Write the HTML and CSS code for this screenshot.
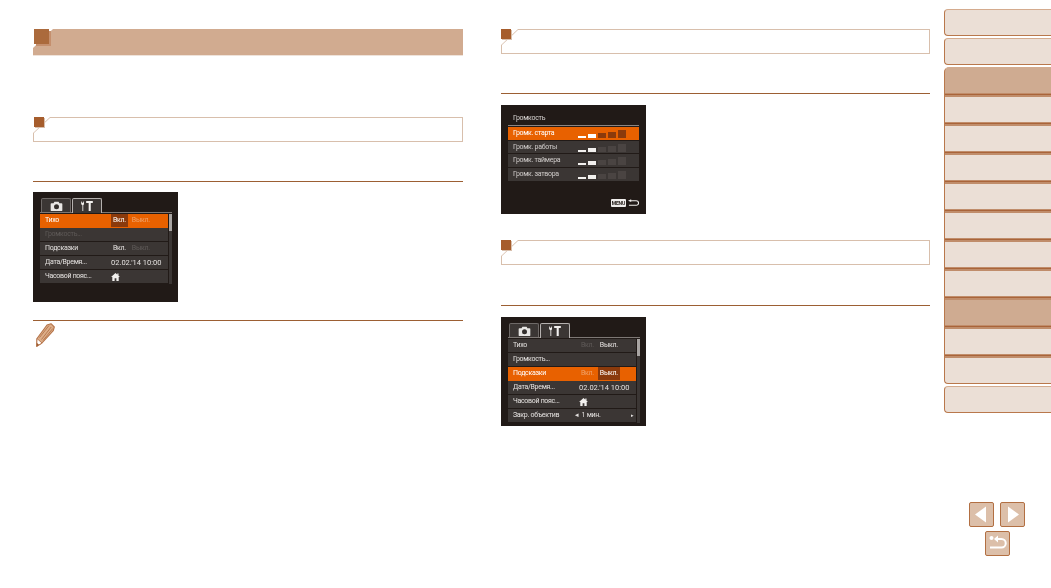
FILE: index.html
```html
<!DOCTYPE html>
<html lang="ru">
<head>
<meta charset="utf-8">
<title>Руководство</title>
<link rel="stylesheet" href="styles.css">
</head>
<body>
<svg class="defs" width="0" height="0" aria-hidden="true">
  <symbol id="cam" viewBox="0 0 14 12"><path fill="#e8e6e4" d="M4.500 1h5l1 1.600H13a1 1 0 0 1 1 1V11a1 1 0 0 1-1 1H1a1 1 0 0 1-1-1V3.600a1 1 0 0 1 1-1h2.500z"/><circle cx="7" cy="7" r="3" fill="#332e2c"/></symbol>
  <symbol id="tools" viewBox="0 0 14 12"><path fill="#f2f0ee" d="M0 1.500 1 0v2h1.400V0l1 1.500V4L2.500 5v7h-1V5L0 4zM6 0h8v2.500h-2.500V12H9V2.500H6z"/></symbol>
  <symbol id="home" viewBox="0 0 10 9"><path fill="#f2f0ee" d="M5 0l5 4.500H8.600V9H6V6H4v3H1.400V4.500H0zM7 .6h1.400V3L7 1.800z"/></symbol>
</svg>
<div class="page">
  <main class="col col-left">
    <div class="h1"><div class="h1-shape"></div><span class="mark-lg"></span></div>
    <div class="h2 h2-first"><div class="h2-frame"></div><span class="mark"></span></div>
    <hr class="rule rule-a">
    <section class="screen screen-a">
      <div class="tabs">
        <span class="tab"><svg class="ico-cam"><use href="#cam"/></svg></span>
        <span class="tab on"><svg class="ico-tool"><use href="#tools"/></svg></span>
      </div>
      <div class="menu">
        <div class="rows">
          <div class="row sel"><span class="lbl">Тихо</span><span class="opt box">Вкл.</span><span class="opt dimo">Выкл.</span></div>
          <div class="row"><span class="lbl off">Громкость...</span></div>
          <div class="row"><span class="lbl">Подсказки</span><span class="opt">Вкл.</span><span class="opt off">Выкл.</span></div>
          <div class="row"><span class="lbl">Дата/Время...</span><span class="val">02.02.'14 10:00</span></div>
          <div class="row"><span class="lbl">Часовой пояс...</span><svg class="ico-home"><use href="#home"/></svg></div>
        </div>
        <div class="scroll"><i class="thumb"></i></div>
      </div>
    </section>
    <hr class="rule rule-b">
    <svg class="pencil" viewBox="0 0 19 24" aria-hidden="true">
      <path d="M11 2 15 .7l3.300 3.300-1 3.700L6 20 .7 23.300 1 15.500z" fill="#dcae8a" stroke="#b5744a" stroke-width="1.100" stroke-linejoin="round"/>
      <path d="M13 2.500 3.500 14.500M15.200 4 5.500 16.500M16.800 5.500 7 17.500" fill="none" stroke="#b5744a" stroke-width=".9"/>
      <path d="M1 15.500 6 20 .7 23.300z" fill="#fff" stroke="#b5744a" stroke-width=".9" stroke-linejoin="round"/>
      <path d="M.7 19.800 3 21.800.7 23.500z" fill="#9c5c30"/>
    </svg>
  </main>

  <main class="col col-right">
    <div class="h2"><div class="h2-frame"></div><span class="mark"></span></div>
    <hr class="rule rule-a">
    <section class="screen screen-b">
      <div class="vol-title">Громкость</div>
      <div class="vol-rows">
        <div class="vrow sel"><span class="vlbl">Громк. старта</span><span class="bars lit"><i></i><i></i><i></i><i></i><i></i></span></div>
        <div class="vrow"><span class="vlbl">Громк. работы</span><span class="bars"><i></i><i></i><i></i><i></i><i></i></span></div>
        <div class="vrow"><span class="vlbl">Громк. таймера</span><span class="bars"><i></i><i></i><i></i><i></i><i></i></span></div>
        <div class="vrow"><span class="vlbl">Громк. затвора</span><span class="bars"><i></i><i></i><i></i><i></i><i></i></span></div>
      </div>
      <div class="vol-foot"><span class="menu-key">MENU</span>
        <svg class="back-mini" viewBox="0 0 12 8"><path d="M3 1.500h6a2.500 2.500 0 0 1 0 5H1" fill="none" stroke="#f0eeec" stroke-width="1.200"/><path d="M0 1.500 3.500 0v3z" fill="#f0eeec"/></svg>
      </div>
    </section>
    <div class="h2 h2-second"><div class="h2-frame"></div><span class="mark"></span></div>
    <hr class="rule rule-c">
    <section class="screen screen-c">
      <div class="tabs">
        <span class="tab"><svg class="ico-cam"><use href="#cam"/></svg></span>
        <span class="tab on"><svg class="ico-tool"><use href="#tools"/></svg></span>
      </div>
      <div class="menu">
        <div class="rows">
          <div class="row"><span class="lbl">Тихо</span><span class="opt off">Вкл.</span><span class="opt">Выкл.</span></div>
          <div class="row"><span class="lbl">Громкость...</span></div>
          <div class="row sel"><span class="lbl">Подсказки</span><span class="opt dimo">Вкл.</span><span class="opt box">Выкл.</span></div>
          <div class="row"><span class="lbl">Дата/Время...</span><span class="val">02.02.'14 10:00</span></div>
          <div class="row"><span class="lbl">Часовой пояс...</span><svg class="ico-home"><use href="#home"/></svg></div>
          <div class="row"><span class="lbl">Закр. объектив</span><span class="pick">◂&nbsp;&nbsp;1 мин.</span><span class="pick-r">▸</span></div>
        </div>
        <div class="scroll"><i class="thumb"></i></div>
      </div>
    </section>
  </main>

  <nav class="side">
    <div class="tab-solo"></div>
    <div class="tab-solo"></div>
    <div class="tab-group">
      <div class="st st-first cur"></div>
      <div class="st"></div>
      <div class="st"></div>
      <div class="st"></div>
      <div class="st"></div>
      <div class="st"></div>
      <div class="st"></div>
      <div class="st"></div>
      <div class="st cur"></div>
      <div class="st"></div>
      <div class="st st-last"></div>
    </div>
    <div class="tab-solo"></div>
    <div class="pager">
      <div class="pager-row">
        <span class="pbtn"><svg viewBox="0 0 23 23"><path d="M16 3.500v16L5 11.500z" fill="#fff"/></svg></span>
        <span class="pbtn"><svg viewBox="0 0 23 23"><path d="M7 3.500v16l11-8z" fill="#fff"/></svg></span>
      </div>
      <span class="pbtn"><svg viewBox="0 0 23 23"><circle cx="5.500" cy="6" r="2" fill="#fff"/><path d="M11 7h4.500a4 4 0 0 1 0 8.500H4" fill="none" stroke="#fff" stroke-width="2"/><path d="M8 7l4-3.500v7z" fill="#fff"/></svg></span>
    </div>
  </nav>
</div>
</body>
</html>
```

FILE: styles.css
```css
* { box-sizing: border-box; }
html, body { margin: 0; padding: 0; background: #fff; }
body { font-family: "Liberation Sans", Arial, sans-serif; overflow: hidden; }
.defs { position: absolute; }

.page { display: flex; width: 1051px; height: 588px; }
.col { display: flex; flex-direction: column; padding-top: 29px; flex: none; }
.col-left { width: 430px; margin-left: 33px; }
.col-right { width: 429px; margin-left: 38px; }

/* section headings */
.h1 { position: relative; height: 27px; flex: none; margin-bottom: 61px; }
.h1-shape { position: absolute; inset: 0; background: #d1ab90; border-bottom: 1px solid #efe3da; clip-path: polygon(20px 0, 100% 0, 100% 100%, 0 100%, 0 19px); }
.mark-lg { position: absolute; left: 1px; top: 0; width: 15px; height: 15px; background: #ab6a3c; box-shadow: 2px 2px 0 #c58f6d; }

.h2 { position: relative; height: 25px; flex: none; }
.h2-second { margin-top: 26px; }
.h2-frame { position: absolute; inset: 0; background: #d8bfac; clip-path: polygon(17px 0, 100% 0, 100% 100%, 0 100%, 0 16px); }
.h2-frame::before { content: ""; position: absolute; inset: 1px; background: #fff; clip-path: polygon(16px 0, 100% 0, 100% 100%, 0 100%, 0 15px); }
.mark { position: absolute; left: 1px; top: 0; width: 10px; height: 10px; background: #a65d2c; box-shadow: 1px 1px 0 #d8bfac; }
.col-right .mark { left: 0; }

.rule { border: 0; height: 1px; margin: 0; background: #9c5f33; flex: none; }
.rule-a { margin-top: 39px; }
.rule-b { margin-top: 18px; }
.rule-c { margin-top: 40px; }

/* camera screens */
.screen { background: #211a17; color: #ece9e7; width: 145px; flex: none; font-family: Roboto, "Liberation Sans", sans-serif; font-size: 7px; letter-spacing: -0.3px; line-height: 1; }
.screen-a { height: 110px; margin-top: 10px; padding: 6px 6px 0 7px; }
.screen-b { height: 109px; margin-top: 11px; display: flex; flex-direction: column; padding: 0 7px; }
.screen-c { height: 109px; margin-top: 11px; padding: 6px 6px 0 7px; }
.screen > * { filter: blur(.3px); }

.tabs { display: flex; gap: 1px; height: 15px; padding-left: 1px; border-bottom: 1px solid #7d7774; }
.tab { width: 30px; height: 14px; display: flex; align-items: center; justify-content: center; background: #3b3634; border: 1px solid #6e6967; border-bottom: 0; border-radius: 2px 2px 0 0; }
.tab.on { height: 15px; background: #3b3634; border-color: #b5b1af; }
.ico-cam { width: 13px; height: 10px; }
.ico-tool { width: 12px; height: 10px; }
.ico-home { width: 9px; height: 8px; }

.menu { display: flex; gap: 1px; margin-top: 1px; }
.rows { flex: 1; display: flex; flex-direction: column; }
.row { height: 14px; display: flex; align-items: center; background: #3b3634; border-bottom: 1px solid #211a17; padding-left: 5px; color: #e4e1df; }
.row.sel { background: #e86100; color: #fff; border-bottom-color: #e86100; }
.lbl { width: 66px; flex: none; white-space: nowrap; }
.opt { height: 13px; display: flex; align-items: center; padding: 0 2px; margin-right: 2px; white-space: nowrap; }
.opt.box { background: #8a3a0c; color: #fff; }
.off { color: #5f5a58; }
.dimo { color: #f0a36a; }
.val { font-size: 7.500px; letter-spacing: 0; white-space: nowrap; }
.pick { white-space: nowrap; margin-left: -4px; }
.pick-r { margin-left: auto; padding-right: 2px; font-size: 5px; }
.scroll { width: 3px; flex: none; background: #3b3634; }
.thumb { display: block; height: 17px; background: #a8a4a2; }

/* volume screen */
.vol-title { flex: none; height: 13px; margin-top: 8px; padding: 2px 0 0 5px; border-bottom: 1px solid #8a8583; color: #d9d6d4; }
.vol-rows { display: flex; flex-direction: column; margin-top: 1px; }
.vrow { height: 13.700px; display: flex; align-items: center; background: #3b3634; border-bottom: 1px solid #211a17; padding-left: 5px; color: #cfcbc9; }
.vrow.sel { background: #e86100; color: #fff; border-bottom-color: #211a17; }
.vlbl { width: 65px; flex: none; white-space: nowrap; }
.bars { display: flex; align-items: flex-end; gap: 2px; height: 9px; }
.bars i { display: block; background: #4a4442; width: 8px; }
.bars i:nth-child(1) { height: 2px; background: #f2f0ee; }
.bars i:nth-child(2) { height: 4px; background: #f2f0ee; }
.bars i:nth-child(3) { height: 5px; }
.bars i:nth-child(4) { height: 6px; }
.bars i:nth-child(5) { height: 8px; }
.bars.lit i { background: #8a3a0c; }
.bars.lit i:nth-child(1), .bars.lit i:nth-child(2) { background: #fff; }
.vol-foot { margin-top: auto; padding-bottom: 7px; display: flex; justify-content: flex-end; align-items: center; gap: 2px; }
.menu-key { background: #f0eeec; color: #211a17; font-size: 5px; font-weight: 700; padding: 1.500px 1px; border-radius: 1px; letter-spacing: -0.2px; }
.back-mini { width: 11px; height: 8px; }

.pencil { width: 19px; height: 24px; margin: 2px 0 0 3px; flex: none; }

/* side index */
.side { width: 107px; margin-left: 14px; padding-top: 9px; display: flex; flex-direction: column; flex: none; }
.tab-solo { height: 27px; margin-bottom: 2px; flex: none; background: #ebdfd6; border: 1px solid #b9784c; border-top-color: #d4ab8e; border-right: 0; border-radius: 4px 0 0 4px; }
.tab-group { display: flex; flex-direction: column; flex: none; margin-bottom: 2px; }
.st { height: 29px; flex: none; padding-top: 4px; background: linear-gradient(#c08d6b 0 1px, #a9643a 1px 2px, #c08d6b 2px 4px, transparent 4px), #ebdfd6; border-left: 1px solid #b9784c; }
.st-first { height: 26px; padding-top: 0; background: #cfab91; border-top: 1px solid #d4ab8e; border-radius: 5px 0 0 0; }
.st-last { height: 30px; border-bottom: 1px solid #b9784c; border-radius: 0 0 0 4px; }
.st.cur { background: linear-gradient(#c08d6b 0 1px, #a9643a 1px 2px, #c08d6b 2px 4px, transparent 4px), #cfab91; }
.st-first.cur { background: #cfab91; }
.pager { margin-top: 87px; padding-left: 25px; width: 81px; display: flex; flex-direction: column; align-items: center; gap: 4px; }
.pager-row { display: flex; gap: 6px; }
.pbtn { width: 25px; height: 25px; display: block; background: #dcbfa9; border: 1px solid #b26f42; border-radius: 2px; }
.pbtn svg { display: block; width: 23px; height: 23px; }
```
